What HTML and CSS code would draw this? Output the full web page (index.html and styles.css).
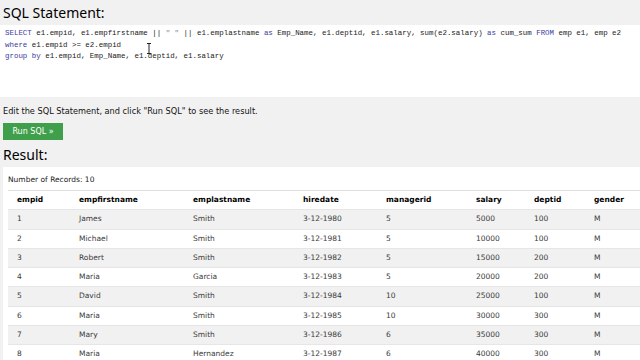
FILE: index.html
```html
<!DOCTYPE html>
<html lang="en">
<head>
    <meta charset="UTF-8">
    <meta name="viewport" content="width=device-width, initial-scale=1.0">
    <title>SQL Tryit Editor</title>
    <link rel="stylesheet" href="styles.css">
</head>
<body>

    <h2 class="title">SQL Statement:</h2>
    <div class="editor">
        <div class="code-line"><span class="kw">SELECT</span> e1.empid, e1.empfirstname || <span class="str">" "</span> || e1.emplastname <span class="kw">as</span> Emp_Name, e1.deptid, e1.salary, sum(e2.salary) <span class="kw">as</span> cum_sum <span class="kw">FROM</span> emp e1, emp e2</div>
        <div class="code-line"><span class="kw">where</span> e1.empid &gt;= e2.empid</div>
        <div class="code-line"><span class="kw">group by</span> e1.empid, Emp_Name, e1.deptid, e1.salary</div>
        <svg class="cursor" width="6" height="11" viewBox="0 0 6 11">
            <path d="M1 0.5h4M1 10.5h4M3 0.5v10" stroke="#222" stroke-width="1" fill="none"/>
        </svg>
    </div>

    <p class="hint">Edit the SQL Statement, and click "Run SQL" to see the result.</p>
    <button class="run-btn">Run SQL &raquo;</button>

    <h2 class="title result-title">Result:</h2>
    <div class="result">
        <div class="records">Number of Records: 10</div>
        <table class="data">
            <colgroup>
                <col class="c1"><col class="c2"><col class="c3"><col class="c4">
                <col class="c5"><col class="c6"><col class="c7"><col class="c8">
            </colgroup>
            <thead>
                <tr><th>empid</th><th>empfirstname</th><th>emplastname</th><th>hiredate</th><th>managerid</th><th>salary</th><th>deptid</th><th>gender</th></tr>
            </thead>
            <tbody id="rows"></tbody>
        </table>
    </div>

    <script>
        const employees = [
            [1, 'James', 'Smith', '3-12-1980', 5, 5000, 100, 'M'],
            [2, 'Michael', 'Smith', '3-12-1981', 5, 10000, 100, 'M'],
            [3, 'Robert', 'Smith', '3-12-1982', 5, 15000, 200, 'M'],
            [4, 'Maria', 'Garcia', '3-12-1983', 5, 20000, 200, 'M'],
            [5, 'David', 'Smith', '3-12-1984', 10, 25000, 100, 'M'],
            [6, 'Maria', 'Smith', '3-12-1985', 10, 30000, 300, 'M'],
            [7, 'Mary', 'Smith', '3-12-1986', 6, 35000, 300, 'M'],
            [8, 'Maria', 'Hernandez', '3-12-1987', 6, 40000, 300, 'M']
        ];

        const tbody = document.getElementById('rows');
        employees.forEach(emp => {
            tbody.innerHTML += '<tr>' + emp.map(v => `<td>${v}</td>`).join('') + '</tr>';
        });
    </script>

</body>
</html>
```

FILE: styles.css
```css
body {
    margin: 0;
    background-color: #f1f1f1;
    font-family: "DejaVu Sans", Verdana, sans-serif;
    color: #000;
    overflow: hidden;
}
.title {
    margin: 0;
    padding: 3px 3px 0;
    height: 22px;
    font-family: "Noto Sans", "Open Sans", sans-serif;
    font-size: 14px;
    font-weight: normal;
    line-height: 20px;
}
.editor {
    position: relative;
    background: white;
    height: 66px;
    padding: 3px 5px;
    font-family: "Liberation Mono", monospace;
    font-size: 7.45px;
    line-height: 11.5px;
    color: #222;
    white-space: nowrap;
}
.kw {
    color: #3b3ba0;
}
.str {
    color: #888;
}
.cursor {
    position: absolute;
    left: 146px;
    top: 18px;
}
.hint {
    margin: 0;
    padding: 8px 3px 0;
    height: 18px;
    font-size: 8.2px;
    line-height: 12px;
    color: #111;
}
.run-btn {
    display: block;
    margin-left: 3px;
    width: 60px;
    height: 17px;
    padding: 0;
    border: none;
    background-color: #3f9f4a;
    color: white;
    font-family: "DejaVu Sans", Verdana, sans-serif;
    font-size: 8px;
}
.result-title {
    padding-top: 5px;
}
.result {
    background: white;
    margin-left: 3px;
    padding: 7px 0 0 5px;
}
.records {
    font-size: 7.5px;
    line-height: 12px;
    color: #222;
    margin-bottom: 4px;
}
.data {
    border-collapse: collapse;
    table-layout: fixed;
    width: 700px;
    font-size: 7.5px;
    color: #3a3a3a;
    border-top: 1px solid #ddd;
}
.c1 { width: 62px; }
.c2 { width: 114px; }
.c3 { width: 110px; }
.c4 { width: 83px; }
.c5 { width: 90px; }
.c6 { width: 58px; }
.c7 { width: 60px; }
.c8 { width: 123px; }
.data th, .data td {
    text-align: left;
    padding: 4px 9px;
    line-height: 10.25px;
    border-bottom: 1px solid #e6e6e6;
}
.data th {
    color: #000;
    font-weight: bold;
}
.data tbody tr:nth-child(odd) {
    background-color: #f1f1f1;
}
```
